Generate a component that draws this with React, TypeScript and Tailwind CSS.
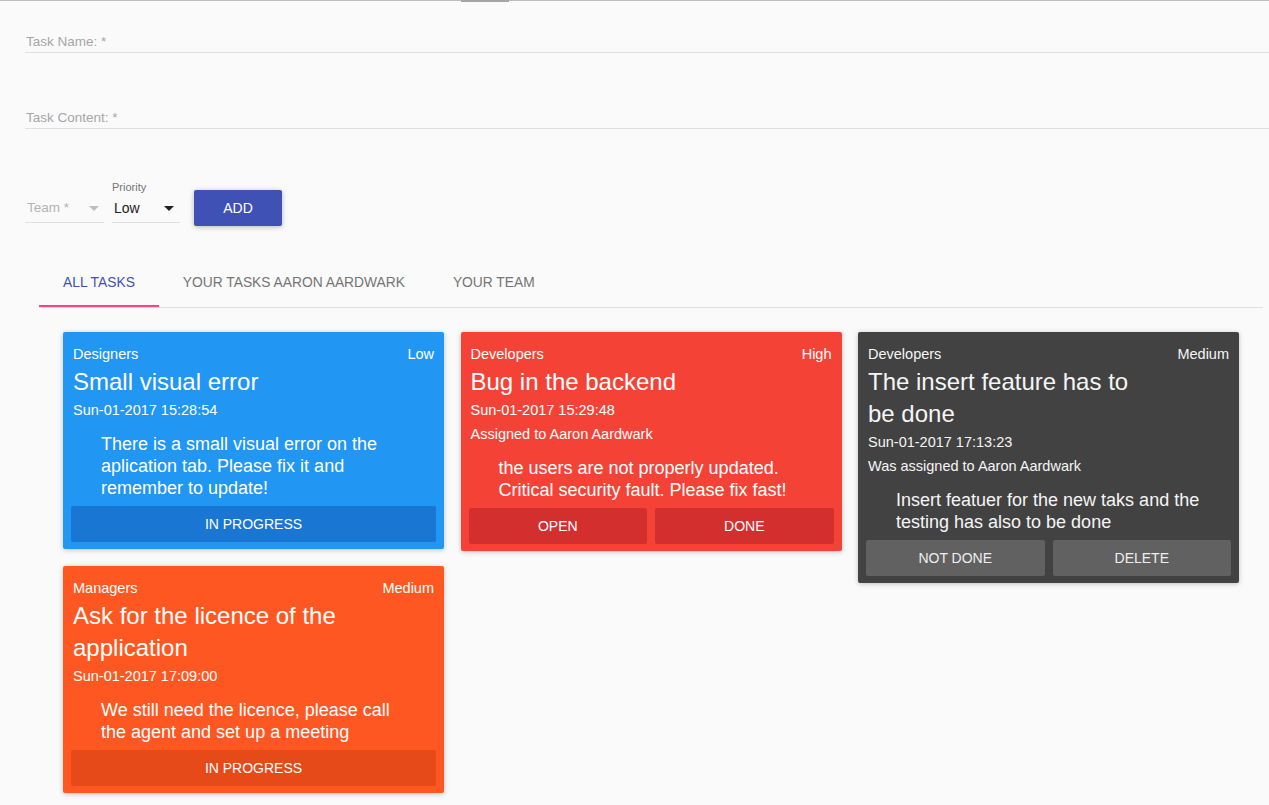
import { ReactNode } from "react";

type Task = {
  team: string;
  priority: string;
  title: string;
  date: string;
  assigned?: string;
  content: string;
  buttons: string[];
  bg: string;
  btn: string;
};

const tasks: Task[][] = [
  [
    {
      team: "Designers",
      priority: "Low",
      title: "Small visual error",
      date: "Sun-01-2017 15:28:54",
      content: "There is a small visual error on the aplication tab. Please fix it and remember to update!",
      buttons: ["In progress"],
      bg: "bg-[#2196f3] text-white",
      btn: "bg-[#1976d2] text-white",
    },
    {
      team: "Managers",
      priority: "Medium",
      title: "Ask for the licence of the application",
      date: "Sun-01-2017 17:09:00",
      content: "We still need the licence, please call the agent and set up a meeting",
      buttons: ["In progress"],
      bg: "bg-[#ff5722] text-white",
      btn: "bg-[#e64a19] text-white",
    },
  ],
  [
    {
      team: "Developers",
      priority: "High",
      title: "Bug in the backend",
      date: "Sun-01-2017 15:29:48",
      assigned: "Assigned to Aaron Aardwark",
      content: "the users are not properly updated. Critical security fault. Please fix fast!",
      buttons: ["Open", "Done"],
      bg: "bg-[#f44336] text-white",
      btn: "bg-[#d32f2f] text-white",
    },
  ],
  [
    {
      team: "Developers",
      priority: "Medium",
      title: "The insert feature has to be done",
      date: "Sun-01-2017 17:13:23",
      assigned: "Was assigned to Aaron Aardwark",
      content: "Insert featuer for the new taks and the testing has also to be done",
      buttons: ["Not done", "Delete"],
      bg: "bg-[#424242] text-[#f5f5f5]",
      btn: "bg-[#616161] text-[#eeeeee]",
    },
  ],
];

const Arrow = ({ className }: { className: string }) => (
  <svg width="10" height="5" viewBox="0 0 10 5" className={className}>
    <path d="M0 0l5 5 5-5z" fill="currentColor" />
  </svg>
);

const Field = ({ label, className }: { label: string; className: string }) => (
  <div className={`border-b border-[#e0e0e0] pl-px text-[13.5px] leading-[21px] text-[#a6a6a6] ${className}`}>
    {label}
  </div>
);

const Select = ({ label, value, width, children }: { label?: string; value: ReactNode; width: string; children?: ReactNode }) => (
  <div className={`flex flex-col ${width}`}>
    <div className="h-[13px] text-[11px] leading-[13px] text-[#757575]">{label}</div>
    <div className="flex h-[29px] items-center justify-between border-b border-[#e0e0e0] pl-[2px] pr-[5px]">
      {value}
      {children}
    </div>
  </div>
);

const TaskCard = ({ task }: { task: Task }) => (
  <div className={`rounded-[2px] shadow-[0_1px_6px_rgba(0,0,0,0.12),0_1px_4px_rgba(0,0,0,0.12)] ${task.bg}`}>
    <div className="px-[10px] pt-[10px]">
      <div className="flex justify-between text-[14.5px] leading-6">
        <span>{task.team}</span>
        <span>{task.priority}</span>
      </div>
      <div className="max-w-[280px] text-2xl leading-8">{task.title}</div>
      <div className="text-[14.5px] leading-6">{task.date}</div>
      {task.assigned && <div className="text-[14.5px] leading-6">{task.assigned}</div>}
      <p className="mt-[11px] ml-7 mr-6 text-lg leading-[22px]">{task.content}</p>
    </div>
    <div className="flex gap-2 px-2 pt-[7px] pb-[7px]">
      {task.buttons.map((b) => (
        <button key={b} className={`h-9 flex-1 rounded-[2px] text-sm uppercase ${task.btn}`}>
          {b}
        </button>
      ))}
    </div>
  </div>
);

export default function App() {
  const tabs = ["All tasks", "Your tasks Aaron Aardwark", "Your team"];

  return (
    <div className="min-h-screen bg-[#fafafa] font-['Liberation_Sans',Arial,sans-serif]">
      <div className="relative h-px bg-[#bdbdbd]">
        <div className="absolute left-[461px] top-0 h-[2px] w-12 bg-[#a5a5a5]" />
      </div>

      {/* new task form */}
      <div className="pl-[25px]">
        <Field label="Task Name: *" className="mt-[30px]" />
        <Field label="Task Content: *" className="mt-[54px]" />

        <div className="mt-[52px] flex items-start">
          <Select width="w-[79px]" value={<span className="text-[13.5px] text-[#b3b3b3]">Team *</span>}>
            <Arrow className="text-[#bdbdbd]" />
          </Select>
          <div className="ml-2">
            <Select label="Priority" width="w-[68px]" value={<span className="text-sm text-[#212121]">Low</span>}>
              <Arrow className="w-3 text-[#212121]" />
            </Select>
          </div>
          <button className="mt-[9px] ml-[14px] h-9 w-[88px] rounded-[2px] bg-[#3f51b5] text-sm text-white shadow-[0_1px_6px_rgba(0,0,0,0.12),0_1px_4px_rgba(0,0,0,0.16)]">
            ADD
          </button>
        </div>
      </div>

      {/* tabs */}
      <div className="mt-[33px] ml-[39px] mr-[6px] flex border-b border-[#e0e0e0]">
        {tabs.map((t, i) => (
          <div
            key={t}
            className={`relative flex h-12 items-center px-6 text-[13.8px] uppercase ${i === 0 ? "text-[#3f51b5]" : "text-[#757575]"}`}
          >
            {t}
            {i === 0 && <div className="absolute bottom-0 left-0 right-0 h-[2px] bg-[#ff4081]" />}
          </div>
        ))}
      </div>

      {/* task cards */}
      <div className="mt-6 ml-[63px] flex items-start gap-x-[16.5px] pb-3">
        {tasks.map((col, i) => (
          <div key={i} className="flex w-[381px] flex-col gap-[17px]">
            {col.map((task) => (
              <TaskCard key={task.title} task={task} />
            ))}
          </div>
        ))}
      </div>
    </div>
  );
}
